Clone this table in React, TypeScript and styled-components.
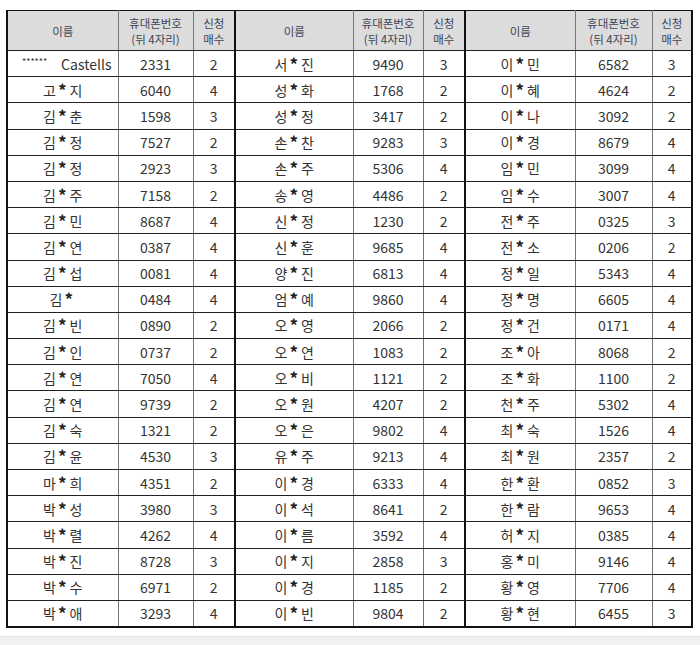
import React from 'react';
import styled, { createGlobalStyle } from 'styled-components'

type Entry = [string, string, number];

// 신청 명단 (세 묶음)
const groups: Entry[][] = [
  [
    ['******|Castells', '2331', 2],
    ['고*지', '6040', 4],
    ['김*춘', '1598', 3],
    ['김*정', '7527', 2],
    ['김*정', '2923', 3],
    ['김*주', '7158', 2],
    ['김*민', '8687', 4],
    ['김*연', '0387', 4],
    ['김*섭', '0081', 4],
    ['김*', '0484', 4],
    ['김*빈', '0890', 2],
    ['김*인', '0737', 2],
    ['김*연', '7050', 4],
    ['김*연', '9739', 2],
    ['김*숙', '1321', 2],
    ['김*윤', '4530', 3],
    ['마*희', '4351', 2],
    ['박*성', '3980', 3],
    ['박*렬', '4262', 4],
    ['박*진', '8728', 3],
    ['박*수', '6971', 2],
    ['박*애', '3293', 4],
  ],
  [
    ['서*진', '9490', 3],
    ['성*화', '1768', 2],
    ['성*정', '3417', 2],
    ['손*찬', '9283', 3],
    ['손*주', '5306', 4],
    ['송*영', '4486', 2],
    ['신*정', '1230', 2],
    ['신*훈', '9685', 4],
    ['양*진', '6813', 4],
    ['엄*예', '9860', 4],
    ['오*영', '2066', 2],
    ['오*연', '1083', 2],
    ['오*비', '1121', 2],
    ['오*원', '4207', 2],
    ['오*은', '9802', 4],
    ['유*주', '9213', 4],
    ['이*경', '6333', 4],
    ['이*석', '8641', 2],
    ['이*름', '3592', 4],
    ['이*지', '2858', 3],
    ['이*경', '1185', 2],
    ['이*빈', '9804', 2],
  ],
  [
    ['이*민', '6582', 3],
    ['이*혜', '4624', 2],
    ['이*나', '3092', 2],
    ['이*경', '8679', 4],
    ['임*민', '3099', 4],
    ['임*수', '3007', 4],
    ['전*주', '0325', 3],
    ['전*소', '0206', 2],
    ['정*일', '5343', 4],
    ['정*명', '6605', 4],
    ['정*건', '0171', 4],
    ['조*아', '8068', 2],
    ['조*화', '1100', 2],
    ['천*주', '5302', 4],
    ['최*숙', '1526', 4],
    ['최*원', '2357', 2],
    ['한*환', '0852', 3],
    ['한*람', '9653', 4],
    ['허*지', '0385', 4],
    ['홍*미', '9146', 4],
    ['황*영', '7706', 4],
    ['황*현', '6455', 3],
  ],
]

// 묶음별 열 너비 (이름, 번호, 매수)
const colWidths = [
  [111, 75, 42],
  [118, 70, 42],
  [110, 77, 40],
]

const renderName = (name: string) => {
  if (name.includes('|')) {
    const [stars, rest] = name.split('|')
    return (
      <StyledForeignName>
        <StyledTinyStars>{stars}</StyledTinyStars>
        <span>{rest}</span>
      </StyledForeignName>
    )
  }
  const [first, last] = name.split('*')
  return (
    <>
      {first}
      <StyledStar>*</StyledStar>
      {last}
    </>
  )
}

const App: React.FC = () => {
  const rowCount = groups[0].length

  return (
    <>
      <GlobalStyle />
      <StyledPage>
        <StyledTable>
          <colgroup>
            {colWidths.flat().map((w, i) => (
              <col key={i} style={{ width: w }} />
            ))}
          </colgroup>
          <thead>
            <tr>
              {groups.map((_, g) => (
                <React.Fragment key={g}>
                  <StyledHead>이름</StyledHead>
                  <StyledHead>휴대폰번호<br />(뒤 4자리)</StyledHead>
                  <StyledHead $groupEnd>신청<br />매수</StyledHead>
                </React.Fragment>
              ))}
            </tr>
          </thead>
          <tbody>
            {Array.from({ length: rowCount }).map((_, r) => (
              <StyledRow key={r}>
                {groups.map((group, g) => {
                  const [name, phone, qty] = group[r]
                  return (
                    <React.Fragment key={g}>
                      <StyledCell>{renderName(name)}</StyledCell>
                      <StyledCell>{phone}</StyledCell>
                      <StyledCell $groupEnd>{qty}</StyledCell>
                    </React.Fragment>
                  )
                })}
              </StyledRow>
            ))}
          </tbody>
        </StyledTable>
        <StyledBottomBar />
      </StyledPage>
    </>
  )
}

const GlobalStyle = createGlobalStyle`
  html, body {
    margin: 0;
    padding: 0;
    background: #fff;
  }
  body {
    font-family: "Noto Sans CJK KR", "Noto Sans", sans-serif;
  }
`

const StyledPage = styled.div`
  width: 700px;
  height: 645px;
  padding-top: 10px;
  box-sizing: border-box;
  display: flex;
  flex-direction: column;
  overflow: hidden;
`

const StyledTable = styled.table`
  margin-left: 6px;
  width: 687px;
  table-layout: fixed;
  border-collapse: collapse;
  border: 2px solid #111;
  border-top-width: 1px;
  color: #333;
`

const StyledHead = styled.th<{ $groupEnd?: boolean }>`
  height: 39px;
  padding: 0;
  background-color: #dcdcdc;
  font-size: 11.5px;
  font-weight: 400;
  line-height: 16px;
  color: #3c4556;
  text-align: center;
  vertical-align: middle;
  border-bottom: 1px solid #222;
  border-right: ${p => (p.$groupEnd ? '2px solid #111' : '1px solid #777')};
`

const StyledRow = styled.tr`
  height: 26.2px;
`

const StyledCell = styled.td<{ $groupEnd?: boolean }>`
  padding: 0;
  font-size: 14px;
  line-height: 16px;
  text-align: center;
  vertical-align: middle;
  white-space: nowrap;
  border-bottom: 1px solid #222;
  border-right: ${p => (p.$groupEnd ? '2px solid #111' : '1px solid #777')};
`

const StyledStar = styled.span`
  display: inline-block;
  margin: 0 3px 0 2px;
  font-size: 17px;
  line-height: 0;
  font-weight: 700;
  color: #222;
  position: relative;
  top: 1px;
`

const StyledForeignName = styled.span`
  display: flex;
  align-items: center;
  justify-content: space-between;
  padding: 0 6px 0 14px;
`

const StyledTinyStars = styled.span`
  font-size: 9px;
  line-height: 9px;
  position: relative;
  top: -2px;
`

const StyledBottomBar = styled.div`
  margin-top: auto;
  height: 8px;
  background-color: #f1f1f1;
  border-top: 1px solid #e2e2e2;
`

export default App
